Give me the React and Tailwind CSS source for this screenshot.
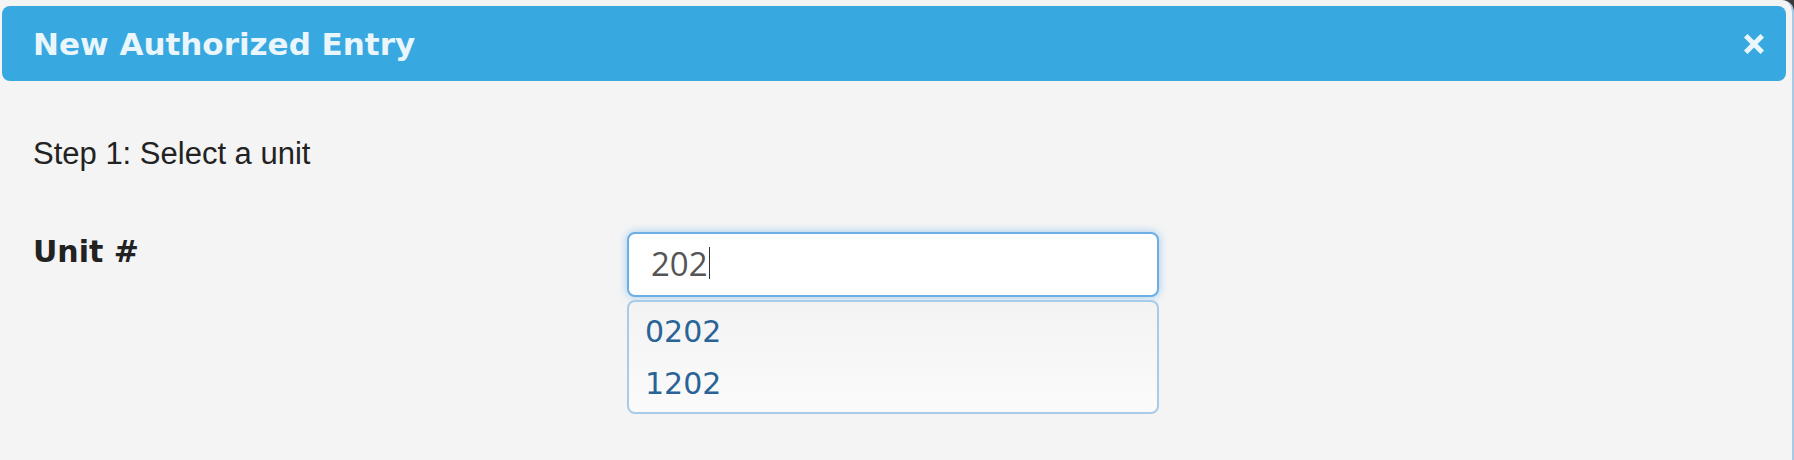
import { useState } from 'react'

const MATCHES = ['0202', '1202']

export default function App() {
  const [query] = useState('202')

  return (
    <div className="w-full h-[460px] bg-[#3a3a3a] overflow-hidden">
      <div className="h-full bg-[#f4f4f4] border-r-2 border-[#a8cae4] rounded-tr-[12px] pt-[6px] pl-[2px] pr-[6px]">
        {/* Header */}
        <div className="h-[75px] rounded-[8px] bg-[#38a9e0] flex items-center justify-between pl-[31px] pr-[22px]">
          <h1 className="text-[31px] leading-[36px] font-bold text-[#eaf6fc] font-['DejaVu_Sans',Verdana,sans-serif]">
            New Authorized Entry
          </h1>
          <button className="w-[20px] h-[20px] flex items-center justify-center">
            <svg width="20" height="20" viewBox="0 0 20 20">
              <path d="M3.5 3.5 L16.5 16.5 M16.5 3.5 L3.5 16.5" stroke="#eaf6fc" strokeWidth="5" strokeLinecap="square" />
            </svg>
          </button>
        </div>

        {/* Body */}
        <div className="pl-[31px] pt-[55px]">
          <p className="text-[31px] leading-[36px] text-[#222] font-['Liberation_Sans',Arial,sans-serif]">
            Step 1: Select a unit
          </p>

          <div className="flex mt-[60px]">
            <label className="w-[594px] mt-[2px] text-[30px] leading-[36px] font-bold text-[#222] font-['DejaVu_Sans',Verdana,sans-serif]">
              Unit #
            </label>

            <div className="w-[532px]">
              <div className="h-[65px] bg-white border-2 border-[#6caee6] rounded-[8px] shadow-[0_0_8px_rgba(102,175,233,0.6)] pl-[22px] pt-[9px] flex items-start">
                <span className="text-[33px] leading-[42px] text-[#555] font-['Open_Sans',sans-serif]">{query}</span>
                <span className="w-px h-[32px] bg-[#333] mt-[4px] ml-[1px]" />
              </div>

              <ul className="mt-[3px] h-[114px] border-2 border-[#a7cbe8] rounded-[8px] bg-gradient-to-b from-[#f3f3f3] to-[#fbfbfb] pl-[16px] pt-[4px]">
                {MATCHES.map((m) => (
                  <li key={m} className="text-[30px] leading-[52px] text-[#2a6496] font-['DejaVu_Sans',Verdana,sans-serif]">
                    {m}
                  </li>
                ))}
              </ul>
            </div>
          </div>
        </div>
      </div>
    </div>
  )
}
